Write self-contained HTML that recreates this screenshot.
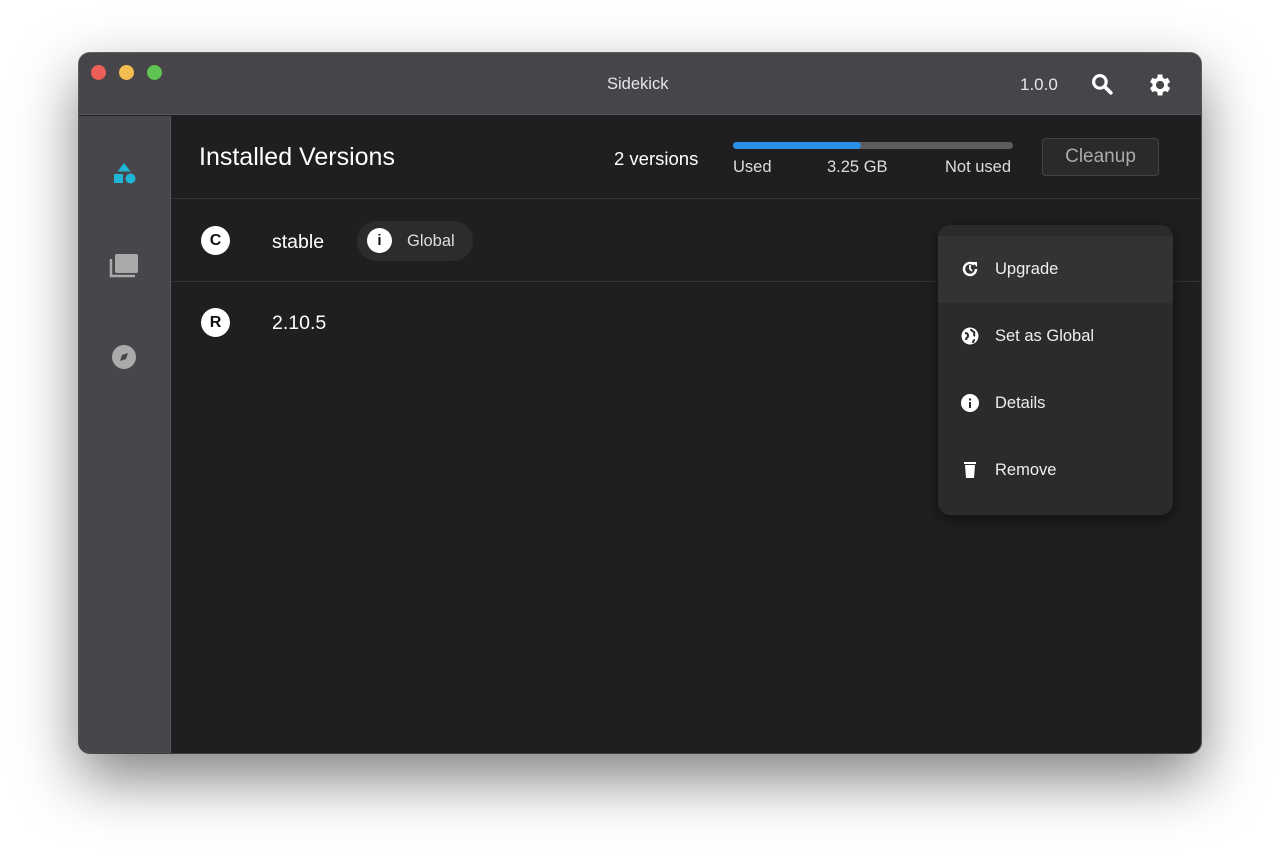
<!DOCTYPE html>
<html><head><style>
*{margin:0;padding:0;box-sizing:border-box}
body{width:1280px;height:858px;background:#fff;font-family:"Liberation Sans",sans-serif;position:relative;overflow:hidden}
.win{position:absolute;left:79px;top:53px;width:1122px;height:700px;border-radius:11px;background:#1f1f21;overflow:hidden;box-shadow:0 25px 60px rgba(0,0,0,.5),0 0 0 1px #6a686d}
.title{position:absolute;left:0;top:0;width:100%;height:62px;background:#47454a;border-bottom:1px solid #5a585d}
.dot{position:absolute;top:12px;width:15px;height:15px;border-radius:50%}
.side{position:absolute;left:0;top:63px;width:92px;bottom:0;background:#48464b;border-right:1px solid #5a585d}
.t{position:absolute;color:#eee;white-space:nowrap}
.line{position:absolute;left:93px;right:0;height:1px;background:#333335}
.circ{position:absolute;width:29px;height:29px;border-radius:50%;background:#fff;color:#111;font-weight:bold;font-size:16px;text-align:center;line-height:29px}
.menu{position:absolute;left:859px;top:172px;width:235px;height:290px;background:#2b2b2d;border-radius:12px;box-shadow:0 4px 14px rgba(0,0,0,.5)}
.mi{position:absolute;left:0;width:100%;height:67px}
.mi span{position:absolute;left:57px;top:24px;font-size:16.5px;color:#eee}
.mi svg{position:absolute;left:23px;top:24px}
</style></head><body>
<div class="win">
 <div class="title">
  <div class="dot" style="left:12px;background:#ec5f57"></div>
  <div class="dot" style="left:40px;background:#f4bd4f"></div>
  <div class="dot" style="left:68px;background:#5fc453"></div>
  <div class="t" style="left:528px;top:22px;font-size:16.5px;color:#e6e6e6">Sidekick</div>
  <div class="t" style="left:941px;top:22px;font-size:17px;color:#e6e6e6">1.0.0</div>
  <svg style="position:absolute;left:1012px;top:20px" width="23" height="23" viewBox="0 0 22 22"><circle cx="8.5" cy="8.5" r="6" fill="none" stroke="#fff" stroke-width="3"/><path d="M13 13l6 6" stroke="#fff" stroke-width="3.5" stroke-linecap="round"/></svg>
  <svg style="position:absolute;left:1066px;top:18px" width="28" height="28" viewBox="0 0 24 24"><path fill="#fff" d="M19.4 13a7.5 7.5 0 000-2l2.1-1.6-2-3.5-2.5 1a7.6 7.6 0 00-1.7-1L14.9 3h-4l-.4 2.9a7.6 7.6 0 00-1.7 1l-2.5-1-2 3.5L6.4 11a7.5 7.5 0 000 2l-2.1 1.6 2 3.5 2.5-1a7.6 7.6 0 001.7 1l.4 2.9h4l.4-2.9a7.6 7.6 0 001.7-1l2.5 1 2-3.5zM12.9 15.5a3.5 3.5 0 110-7 3.5 3.5 0 010 7z"/></svg>
 </div>
 <div class="side">
  <svg style="position:absolute;left:33px;top:45px" width="26" height="26" viewBox="0 0 26 26"><path d="M12 2l6.5 8.5H5.5z" fill="#1fb5d6"/><rect x="2" y="13" width="9" height="9" fill="#1fb5d6"/><circle cx="18.5" cy="17.5" r="5" fill="#1fb5d6"/></svg>
  <svg style="position:absolute;left:30px;top:136px" width="30" height="26" viewBox="0 0 30 26"><path d="M2 7v17h24" fill="none" stroke="#aaa" stroke-width="2.5"/><rect x="6" y="2" width="23" height="19" rx="2" fill="#aaa"/></svg>
  <svg style="position:absolute;left:32px;top:228px" width="26" height="26" viewBox="0 0 26 26"><circle cx="13" cy="13" r="12" fill="#aaa"/><path d="M17 9l-2 6-6 2 2-6z" fill="#48464b"/></svg>
 </div>
 <div class="t" style="left:120px;top:90px;font-size:25px;color:#fff">Installed Versions</div>
 <div class="t" style="left:535px;top:95px;font-size:18.5px;color:#fff">2 versions</div>
 <div style="position:absolute;left:654px;top:89px;width:280px;height:7px;border-radius:4px;background:#5d5d5f"><div style="width:128px;height:7px;border-radius:4px;background:#2b8fe8"></div></div>
 <div class="t" style="left:654px;top:105px;font-size:16.5px;color:#ddd">Used</div>
 <div class="t" style="left:748px;top:105px;font-size:16.5px;color:#ddd">3.25 GB</div>
 <div class="t" style="left:866px;top:105px;font-size:16.5px;color:#ddd">Not used</div>
 <div style="position:absolute;left:963px;top:85px;width:117px;height:38px;border:1px solid #444;border-radius:4px;background:#2a2a2c;color:#aaa;font-size:19px;text-align:center;line-height:36px">Cleanup</div>
 <div class="line" style="top:145px"></div>
 <div class="line" style="top:228px"></div>
 <div class="circ" style="left:122px;top:173px">C</div>
 <div class="t" style="left:193px;top:178px;font-size:19.5px;color:#fff">stable</div>
 <div style="position:absolute;left:278px;top:168px;width:116px;height:40px;border-radius:20px;background:#2c2c2e"></div>
 <div class="circ" style="left:288px;top:175px;width:25px;height:25px;line-height:25px;font-size:15px">i</div>
 <div class="t" style="left:328px;top:179px;font-size:16.5px;color:#ddd">Global</div>
 <div class="circ" style="left:122px;top:255px">R</div>
 <div class="t" style="left:193px;top:259px;font-size:19.5px;color:#fff">2.10.5</div>
 <div class="menu">
  <div class="mi" style="top:11px;background:#333335"><svg width="18" height="18" viewBox="0 0 18 18"><path d="M15 9a6 6 0 11-2-4.5" fill="none" stroke="#fff" stroke-width="2.5"/><path d="M11 2h5v5z" fill="#fff"/><path d="M9 5v4l2 2" stroke="#fff" stroke-width="1.8" fill="none"/></svg><span>Upgrade</span></div>
  <div class="mi" style="top:78px"><svg width="18" height="18" viewBox="0 0 18 18"><circle cx="9" cy="9" r="8.5" fill="#fff"/><path d="M4 6c2 0 3 1 3 3s-2 1-2 4M10 2c0 2 2 2 3 3s-1 3 1 4M12 16c0-2 1-3 2-3" stroke="#2b2b2d" stroke-width="2" fill="none"/></svg><span>Set as Global</span></div>
  <div class="mi" style="top:145px"><svg width="18" height="18" viewBox="0 0 18 18"><circle cx="9" cy="9" r="9" fill="#fff"/><rect x="8" y="8" width="2" height="6" fill="#2b2b2d"/><circle cx="9" cy="5.5" r="1.2" fill="#2b2b2d"/></svg><span>Details</span></div>
  <div class="mi" style="top:212px"><svg width="18" height="18" viewBox="0 0 18 18"><rect x="3" y="1" width="12" height="2" fill="#fff"/><path d="M4 4h10l-1 13H5z" fill="#fff"/></svg><span>Remove</span></div>
 </div>
</div>
</body></html>
